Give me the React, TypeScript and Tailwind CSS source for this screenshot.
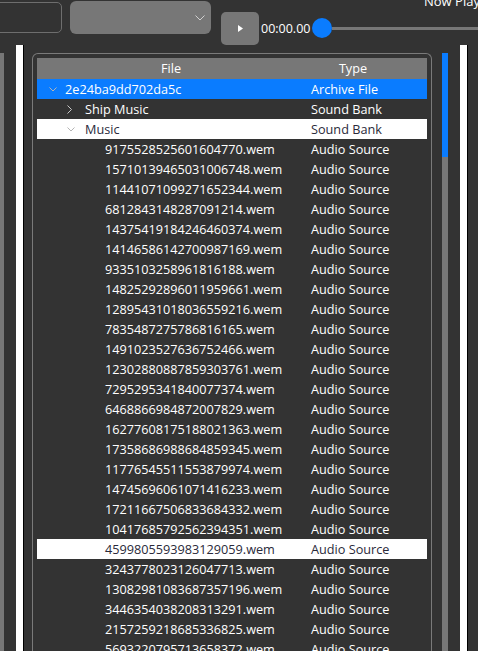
import React from 'react';

type Row = {
  name: string;
  type: string;
  depth: number;
  expander?: 'open' | 'closed';
  state?: 'selected' | 'hover';
};

const files = [
  '9175528525601604770.wem',
  '15710139465031006748.wem',
  '11441071099271652344.wem',
  '6812843148287091214.wem',
  '14375419184246460374.wem',
  '14146586142700987169.wem',
  '9335103258961816188.wem',
  '14825292896011959661.wem',
  '12895431018036559216.wem',
  '7835487275786816165.wem',
  '1491023527636752466.wem',
  '12302880887859303761.wem',
  '7295295341840077374.wem',
  '6468866984872007829.wem',
  '16277608175188021363.wem',
  '17358686988684859345.wem',
  '11776545511553879974.wem',
  '14745696061071416233.wem',
  '17211667506833684332.wem',
  '10417685792562394351.wem',
  '4599805593983129059.wem',
  '3243778023126047713.wem',
  '13082981083687357196.wem',
  '3446354038208313291.wem',
  '2157259218685336825.wem',
  '5693220795713658372.wem',
];

const rows: Row[] = [
  { name: '2e24ba9dd702da5c', type: 'Archive File', depth: 0, expander: 'open', state: 'selected' },
  { name: 'Ship Music', type: 'Sound Bank', depth: 1, expander: 'closed' },
  { name: 'Music', type: 'Sound Bank', depth: 1, expander: 'open', state: 'hover' },
  ...files.map((f, i) => ({
    name: f,
    type: 'Audio Source',
    depth: 2,
    state: i === 20 ? ('hover' as const) : undefined,
  })),
];

const Chevron: React.FC<{ open: boolean }> = ({ open }) =>
  open ? (
    <svg width="8" height="5" viewBox="0 0 8 5" className="text-[#b4b4b4]">
      <path d="M0.5 0.5 L4 4 L7.5 0.5" fill="none" stroke="currentColor" strokeWidth="1" />
    </svg>
  ) : (
    <svg width="5" height="9" viewBox="0 0 5 9" className="text-[#c8c8c8]">
      <path d="M0.5 0.5 L4.5 4.5 L0.5 8.5" fill="none" stroke="currentColor" strokeWidth="1" />
    </svg>
  );

const TreeRow: React.FC<{ row: Row }> = ({ row }) => {
  const bg =
    row.state === 'selected' ? 'bg-[#0a7cff] text-white' : row.state === 'hover' ? 'bg-white text-[#2a2a3a]' : 'text-white';
  const indent = row.depth === 0 ? 'pl-[12px]' : row.depth === 1 ? 'pl-[30px]' : 'pl-[68px]';
  const box = row.depth === 0 ? 'w-[16px]' : 'w-[18px]';
  return (
    <div className={`flex h-[20px] items-center pt-[1px] ${bg}`}>
      <div className={`flex w-[268px] shrink-0 items-center ${indent}`}>
        {row.expander && (
          <span className={`flex shrink-0 items-center justify-start ${box}`}>
            <Chevron open={row.expander === 'open'} />
          </span>
        )}
        <span className="whitespace-nowrap">{row.name}</span>
      </div>
      <div className="whitespace-nowrap pl-[6px]">{row.type}</div>
    </div>
  );
};

export default function App() {
  return (
    <div
      className="h-[651px] w-[478px] overflow-hidden bg-[#333333] text-[12.7px] text-white"
      style={{ fontFamily: '"Open Sans", "Noto Sans", sans-serif' }}
    >
      {/* toolbar */}
      <div className="relative flex h-[45px] items-start">
        <div className="ml-[-10px] mt-[2px] h-[31px] w-[72px] rounded-[5px] border border-[#6e6e6e]" />
        <div className="ml-[8px] mt-[1px] flex h-[33px] w-[141px] items-center justify-end rounded-[6px] bg-[#777777] pr-[6px]">
          <svg width="10" height="6" viewBox="0 0 10 6" className="text-[#d0d0d0]">
            <path d="M0.5 0.5 L5 5 L9.5 0.5" fill="none" stroke="currentColor" strokeWidth="1" />
          </svg>
        </div>
        <div className="ml-[10px] mt-[12px] flex h-[33px] w-[38px] items-center justify-center rounded-[5px] bg-[#777777]">
          <svg width="5" height="7" viewBox="0 0 5 7">
            <path d="M0 0 L5 3.5 L0 7 Z" fill="#ffffff" />
          </svg>
        </div>
        <div className="ml-[2px] mt-[19px] text-[12.5px] leading-[20px]">00:00.00</div>
        <div className="mt-[18px] flex flex-1 items-center">
          <div className="ml-[2px] h-[20px] w-[20px] shrink-0 rounded-full bg-[#0a7cff]" />
          <div className="h-[3px] flex-1 bg-[#777777]" />
        </div>
        <div className="absolute left-[424px] top-[-7px] whitespace-nowrap text-[13px] leading-[16px]">Now Playing</div>
      </div>

      {/* body */}
      <div className="flex h-[606px] items-start">
        <div className="mt-[8px] h-full w-[4px] bg-[#777777]" />
        <div className="ml-[12px] h-full w-[8px] border-r border-black bg-white" />
        <div className="ml-[8px] mt-[8px] h-full w-[400px] rounded-t-[6px] border border-b-0 border-[#7a7a7a] px-[4px] pt-[4px]">
          <div className="flex h-[21px] items-center bg-[#777777] pt-[1px] text-white">
            <div className="w-[268px] text-center">File</div>
            <div className="w-[96px] text-center">Type</div>
          </div>
          {rows.map((r, i) => (
            <TreeRow key={i} row={r} />
          ))}
        </div>
        <div className="ml-[10px] mt-[8px] flex h-full w-[6px] flex-col bg-[#777777]">
          <div className="h-[104px] bg-[#0a7cff]" />
        </div>
        <div className="ml-[12px] h-full w-[8px] border-r border-black bg-white" />
      </div>
    </div>
  );
}
